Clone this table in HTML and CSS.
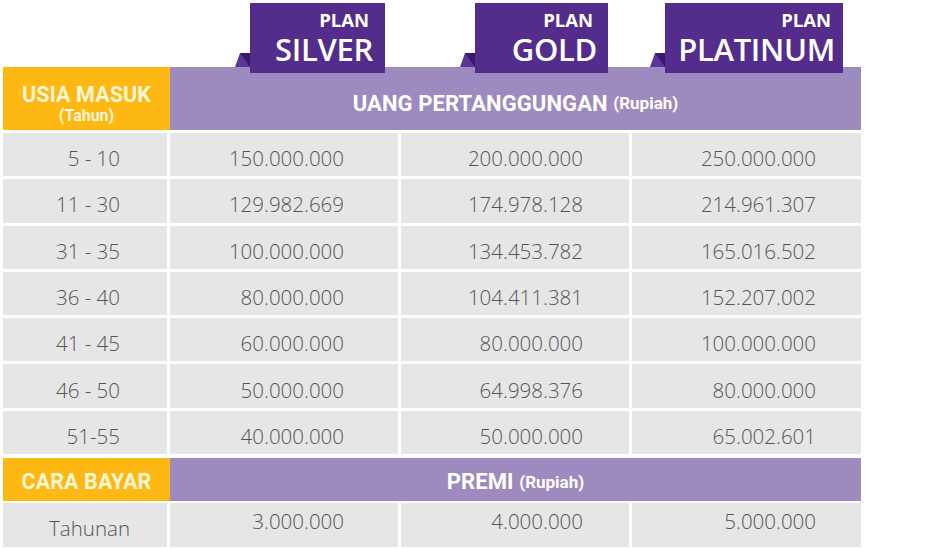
FILE: index.html
```html
<!DOCTYPE html>
<html lang="id">
<head>
<meta charset="utf-8">
<title>Uang Pertanggungan</title>
<link rel="stylesheet" href="styles.css">
</head>
<body>
<div class="sheet">
  <div class="plans">
    <div class="plan plan-silver">
      <svg class="fold" viewBox="0 0 15 14" width="15" height="14"><polygon points="0,14 5,0 15,0 15,14" fill="#5b3597"/><polygon points="5,0 15,14 15,0" fill="#3a176b"/></svg>
      <span class="plan-label">PLAN</span>
      <span class="plan-name">SILVER</span>
    </div>
    <div class="plan plan-gold">
      <svg class="fold" viewBox="0 0 15 14" width="15" height="14"><polygon points="0,14 5,0 15,0 15,14" fill="#5b3597"/><polygon points="5,0 15,14 15,0" fill="#3a176b"/></svg>
      <span class="plan-label">PLAN</span>
      <span class="plan-name">GOLD</span>
    </div>
    <div class="plan plan-platinum">
      <svg class="fold" viewBox="0 0 15 14" width="15" height="14"><polygon points="0,14 5,0 15,0 15,14" fill="#5b3597"/><polygon points="5,0 15,14 15,0" fill="#3a176b"/></svg>
      <span class="plan-label">PLAN</span>
      <span class="plan-name">PLATINUM</span>
    </div>
  </div>

  <div class="head head-main">
    <div class="head-key">
      <span class="key-main">USIA MASUK</span>
      <span class="key-sub">(Tahun)</span>
    </div>
    <div class="head-val">UANG PERTANGGUNGAN <span class="unit">(Rupiah)</span></div>
  </div>

  <div class="grid data">
    <div class="cell age">5 - 10</div><div class="cell num">150.000.000</div><div class="cell num c3">200.000.000</div><div class="cell num c4">250.000.000</div>
    <div class="cell age">11 - 30</div><div class="cell num">129.982.669</div><div class="cell num c3">174.978.128</div><div class="cell num c4">214.961.307</div>
    <div class="cell age">31 - 35</div><div class="cell num">100.000.000</div><div class="cell num c3">134.453.782</div><div class="cell num c4">165.016.502</div>
    <div class="cell age">36 - 40</div><div class="cell num">80.000.000</div><div class="cell num c3">104.411.381</div><div class="cell num c4">152.207.002</div>
    <div class="cell age">41 - 45</div><div class="cell num">60.000.000</div><div class="cell num c3">80.000.000</div><div class="cell num c4">100.000.000</div>
    <div class="cell age">46 - 50</div><div class="cell num">50.000.000</div><div class="cell num c3">64.998.376</div><div class="cell num c4">80.000.000</div>
    <div class="cell age">51-55</div><div class="cell num">40.000.000</div><div class="cell num c3">50.000.000</div><div class="cell num c4">65.002.601</div>
  </div>

  <div class="head head-premi">
    <div class="head-key"><span class="key-main">CARA BAYAR</span></div>
    <div class="head-val">PREMI <span class="unit">(Rupiah)</span></div>
  </div>

  <div class="grid pay">
    <div class="cell pay-key">Tahunan</div><div class="cell num">3.000.000</div><div class="cell num c3">4.000.000</div><div class="cell num c4">5.000.000</div>
  </div>
</div>
</body>
</html>
```

FILE: styles.css
```css
* { box-sizing: border-box; }

html, body {
  margin: 0;
  padding: 0;
  background: #ffffff;
}

.sheet {
  width: 861px;
  padding: 3px 0 0 3px;
  font-family: "Open Sans", "Liberation Sans", sans-serif;
}

/* plan badges */
.plans {
  display: grid;
  grid-template-columns: 164px 228px 228px 229px;
  column-gap: 3px;
  height: 64px;
}

.plan {
  position: relative;
  z-index: 2;
  height: 70px;
  background: #532c8c;
  color: #ffffff;
  display: flex;
  flex-direction: column;
  align-items: flex-end;
  justify-self: end;
  padding: 6px 12px 0 0;
}

.plan-silver { grid-column: 2; width: 135px; margin-right: 13px; }
.plan-gold { grid-column: 3; width: 133px; margin-right: 21px; padding-right: 11px; }
.plan-platinum { grid-column: 4; width: 178px; margin-right: 18px; padding-right: 8px; }

.fold {
  position: absolute;
  left: -15px;
  top: 50px;
  display: block;
}

.plan-label {
  font-size: 18.5px;
  font-weight: 700;
  line-height: 21px;
  margin-right: 4px;
}

.plan-name {
  font-size: 31px;
  font-weight: 600;
  line-height: 36px;
  margin-top: 1px;
  letter-spacing: -0.3px;
}

/* header bars */
.head {
  display: grid;
  grid-template-columns: 167px 691px;
  font-family: Roboto, "Liberation Sans", sans-serif;
  font-weight: 700;
  color: #ffffff;
}

.head-main { height: 63px; }
.head-premi { height: 43px; margin-top: 4px; }

.head-key {
  background: #fdb813;
  color: #fff6d6;
  display: flex;
  flex-direction: column;
  align-items: center;
  justify-content: center;
}

.head-val {
  background: #9d8abf;
  display: flex;
  align-items: center;
  justify-content: center;
  font-size: 22px;
  letter-spacing: 0.1px;
  white-space: pre;
}

.head-main .head-key { padding-top: 10px; }
.head-main .head-val { padding-top: 9px; }
.head-premi .head-key,
.head-premi .head-val { padding-top: 4px; }

.key-main {
  font-size: 21.5px;
  line-height: 24px;
  letter-spacing: 0.1px;
}

.key-sub {
  font-size: 16px;
  line-height: 18px;
}

.unit {
  font-size: 17px;
  letter-spacing: 0;
}

/* data grid */
.grid {
  display: grid;
  grid-template-columns: 164px 228px 228px 229px;
  column-gap: 3px;
  row-gap: 3px;
  margin-top: 3px;
}

.data { grid-auto-rows: 43.3px; }
.pay { grid-auto-rows: 44px; margin-top: 2px; }

.cell {
  background: #e6e6e6;
  color: #555555;
  font-size: 20.5px;
  font-weight: 300;
  display: flex;
  align-items: center;
  justify-content: flex-end;
  padding-top: 7px;
}

.age { padding-right: 47px; }
.num { padding-right: 54px; }
.num.c3 { padding-right: 46px; }
.num.c4 { padding-right: 45px; }

.pay-key {
  padding-right: 37px;
  padding-top: 6px;
}

.pay .num {
  padding-top: 0;
  padding-bottom: 8px;
}
```
